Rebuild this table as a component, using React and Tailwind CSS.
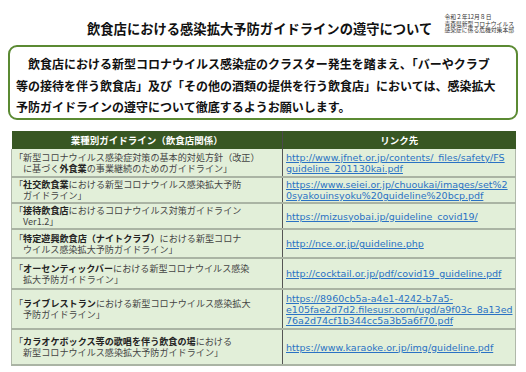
import React from "react";

const jp = { fontFamily: '"Noto Sans CJK JP", "Noto Sans", sans-serif' };
const linkFont = { fontFamily: '"DejaVu Sans", Verdana, sans-serif' };

const rows = [
  {
    h: "h-[28px]",
    text: (
      <>
        「新型コロナウイルス感染症対策の基本的対処方針（改正）
        <br />
        に基づく<b className="text-[#222]">外食業</b>の事業継続のためのガイドライン」
      </>
    ),
    link: ["http://www.jfnet.or.jp/contents/_files/safety/FS", "guideline_201130kai.pdf"],
  },
  {
    h: "h-[26px]",
    text: (
      <>
        「<b className="text-[#222]">社交飲食業</b>における新型コロナウイルス感染拡大予防
        <br />
        ガイドライン」
      </>
    ),
    link: ["https://www.seiei.or.jp/chuoukai/images/set%2", "0syakouinsyoku%20guideline%20bcp.pdf"],
  },
  {
    h: "h-[26px]",
    text: (
      <>
        「<b className="text-[#222]">接待飲食店</b>におけるコロナウイルス対策ガイドライン
        <br />
        Ver1.2」
      </>
    ),
    link: ["https://mizusyobai.jp/guideline_covid19/"],
  },
  {
    h: "h-[29px]",
    text: (
      <>
        「<b className="text-[#222]">特定遊興飲食店（ナイトクラブ）</b>における新型コロナ
        <br />
        ウイルス感染拡大予防ガイドライン」
      </>
    ),
    link: ["http://nce.or.jp/guideline.php"],
  },
  {
    h: "h-[31px]",
    text: (
      <>
        「<b className="text-[#222]">オーセンティックバー</b>における新型コロナウイルス感染
        <br />
        拡大予防ガイドライン」
      </>
    ),
    link: ["http://cocktail.or.jp/pdf/covid19_guideline.pdf"],
  },
  {
    h: "h-[40px]",
    text: (
      <>
        「<b className="text-[#222]">ライブレストラン</b>における新型コロナウイルス感染拡大
        <br />
        予防ガイドライン」
      </>
    ),
    link: [
      "https://8960cb5a-a4e1-4242-b7a5-",
      "e105fae2d7d2.filesusr.com/ugd/a9f03c_8a13ed",
      "76a2d74cf1b344cc5a3b5a6f70.pdf",
    ],
  },
  {
    h: "h-[36px]",
    text: (
      <>
        「<b className="text-[#222]">カラオケボックス等の歌唱を伴う飲食の場</b>における
        <br />
        新型コロナウイルス感染拡大予防ガイドライン」
      </>
    ),
    link: ["https://www.karaoke.or.jp/img/guideline.pdf"],
  },
];

export default function App() {
  return (
    <div className="w-[526px] h-[372px] bg-white overflow-hidden" style={jp}>
      {/* header */}
      <div className="flex items-end h-[40px] pl-[87px] pr-[12px]">
        <h1 className="text-[13.3px] font-bold text-[#111] leading-none pb-[5px]">
          飲食店における感染拡大予防ガイドラインの遵守について
        </h1>
        <div className="ml-auto text-[5.8px] leading-[6.6px] text-[#333] pb-[6px]">
          <div>令和２年12月８日</div>
          <div>青森県新型コロナウイルス</div>
          <div>感染症に係る危機対策本部</div>
        </div>
      </div>

      {/* notice box */}
      <div className="mx-[8px] mt-[5px] h-[75px] border-2 border-[#5b8a33] rounded-[9px] pl-[6px] pt-[6px]">
        <p className="text-[12px] font-bold leading-[21.5px] text-[#111] whitespace-nowrap">
          <span className="pl-[12px]">飲食店における新型コロナウイルス感染症のクラスター発生を踏まえ、「バーやクラブ</span>
          <br />
          等の接待を伴う飲食店」及び「その他の酒類の提供を行う飲食店」においては、感染拡大
          <br />
          予防ガイドラインの遵守について徹底するようお願いします。
        </p>
      </div>

      {/* table */}
      <table className="mt-[11px] ml-[11px] w-[504px] border-collapse table-fixed">
        <colgroup>
          <col className="w-[271px]" />
          <col className="w-[233px]" />
        </colgroup>
        <thead>
          <tr className="h-[18px] bg-[#385723] text-white text-[9.5px]">
            <th className="text-center border-r border-[#4a4a4a] font-bold">業種別ガイドライン（飲食店関係）</th>
            <th className="text-center font-bold">リンク先</th>
          </tr>
        </thead>
        <tbody>
          {rows.map((r, i) => (
            <tr key={i} className={`${r.h} bg-[#e2efd9] border-b-2 border-[#aab4a4]`}>
              <td className="align-middle pl-[2px] border-l border-[#b0b8aa] border-r border-r-[#555] text-[9.1px] leading-[11px] text-[#444] whitespace-nowrap">
                <div className="pl-[9px] -indent-[9px]">{r.text}</div>
              </td>
              <td className="align-middle pl-[3px] border-r border-[#b0b8aa]">
                <div className="text-[9.5px] leading-[11px] text-[#2a72c4] underline whitespace-nowrap" style={linkFont}>
                  {r.link.map((l, j) => (
                    <div key={j}>{l}</div>
                  ))}
                </div>
              </td>
            </tr>
          ))}
        </tbody>
      </table>
    </div>
  );
}
